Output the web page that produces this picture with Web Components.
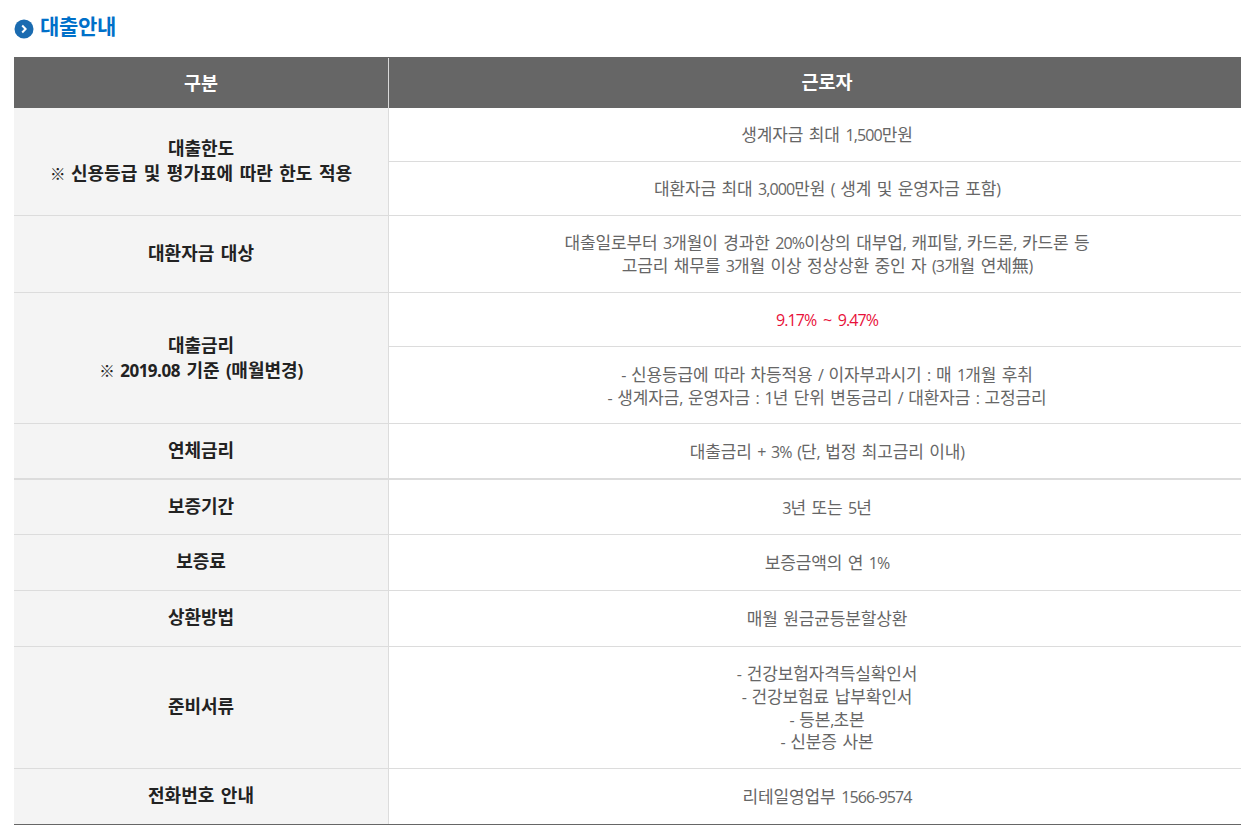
<!DOCTYPE html>
<html lang="ko">
<head>
<meta charset="utf-8">
<title>대출안내</title>
<style>
  html, body { overflow: hidden; }
  body { margin: 0; background: #fff; font-family: "Noto Sans CJK KR", "Noto Sans", sans-serif; }
  /* digits and latin marks run narrower than the hangul in this design */
  .lat {
      font-family: "Open Sans", "Noto Sans", sans-serif;
      font-size: var(--lat-size);
      font-weight: var(--lat-weight);
      letter-spacing: var(--lat-spacing);
      line-height: 0;
  }
  .mark { font-size: 15.5px; margin-right: -1px; }
</style>
</head>
<body>
<loan-guide>
  <section-title>대출안내</section-title>
  <loan-head first="구분" second="근로자"></loan-head>
  <loan-row two-line>
    <span slot="label">대출한도<br><span class="mark">※</span> 신용등급 및 평가표에 따란 한도 적용</span>
    <loan-value h="53">생계자금 최대 1,500만원</loan-value>
    <loan-value h="53">대환자금 최대 3,000만원 ( 생계 및 운영자금 포함)</loan-value>
  </loan-row>
  <loan-row>
    <span slot="label">대환자금 대상</span>
    <loan-value h="76">대출일로부터 3개월이 경과한 20%이상의 대부업, 캐피탈, 카드론, 카드론 등<br>고금리 채무를 3개월 이상 정상상환 중인 자 (3개월 연체無)</loan-value>
  </loan-row>
  <loan-row two-line>
    <span slot="label">대출금리<br><span class="mark">※</span> 2019.08 기준 (매월변경)</span>
    <loan-value h="53" tone="red">9.17% ~ 9.47%</loan-value>
    <loan-value h="74" low>- 신용등급에 따라 차등적용 / 이자부과시기 : 매 1개월 후취<br>- 생계자금, 운영자금 : 1년 단위 변동금리 / 대환자금 : 고정금리</loan-value>
  </loan-row>
  <loan-row thick>
    <span slot="label">연체금리</span>
    <loan-value h="54">대출금리 + 3% (단, 법정 최고금리 이내)</loan-value>
  </loan-row>
  <loan-row>
    <span slot="label">보증기간</span>
    <loan-value h="54">3년 또는 5년</loan-value>
  </loan-row>
  <loan-row>
    <span slot="label">보증료</span>
    <loan-value h="55">보증금액의 연 1%</loan-value>
  </loan-row>
  <loan-row>
    <span slot="label">상환방법</span>
    <loan-value h="55">매월 원금균등분할상환</loan-value>
  </loan-row>
  <loan-row>
    <span slot="label">준비서류</span>
    <loan-value h="121">- 건강보험자격득실확인서<br>- 건강보험료 납부확인서<br>- 등본,초본<br>- 신분증 사본</loan-value>
  </loan-row>
  <loan-row dark>
    <span slot="label">전화번호 안내</span>
    <loan-value h="55">리테일영업부 1566-9574</loan-value>
  </loan-row>
</loan-guide>

<script>
// wrap runs of digits and punctuation so they can take the latin font
function wrapLatin(root) {
    [...root.childNodes].forEach(node => {
        if (node.nodeType !== Node.TEXT_NODE) return;
        const parts = node.textContent.split(/([0-9A-Za-z%,.~+:()\/-]+)/);
        const frag = document.createDocumentFragment();
        parts.forEach((part, i) => {
            if (i % 2) {
                const span = document.createElement('span');
                span.className = 'lat';
                span.textContent = part;
                frag.appendChild(span);
            } else if (part) {
                frag.appendChild(document.createTextNode(part));
            }
        });
        node.replaceWith(frag);
    });
}

class LoanGuide extends HTMLElement {
    constructor() {
        super();
        this.attachShadow({ mode: 'open' });
        this.shadowRoot.innerHTML = `
        <style>
            /* the table runs past the right edge of the window */
            :host { display: block; width: 1251px; padding-left: 14px; }
        </style>
        <slot></slot>`;
    }
}

class SectionTitle extends HTMLElement {
    constructor() {
        super();
        this.attachShadow({ mode: 'open' });
        this.shadowRoot.innerHTML = `
        <style>
            :host {
                display: flex;
                align-items: center;
                gap: 6px;
                height: 57px;
                box-sizing: border-box;
                padding-bottom: 8px;
                color: #0070c9;
                font-size: 21px;
                font-weight: 700;
                letter-spacing: -0.3px;
            }
            svg { flex: none; margin-top: 9px; }
        </style>
        <svg width="20" height="20" viewBox="0 0 20 20">
            <circle cx="10" cy="10" r="9.5" fill="#1a6bb0"/>
            <path d="M8.2 6.5 L11.6 10 L8.2 13.5" fill="none" stroke="#fff" stroke-width="2"/>
        </svg>
        <slot></slot>`;
    }
}

class LoanHead extends HTMLElement {
    constructor() {
        super();
        this.attachShadow({ mode: 'open' });
        this.shadowRoot.innerHTML = `
        <style>
            :host {
                display: grid;
                grid-template-columns: 375px 1fr;
                height: 51px;
                background: #666;
                color: #fff;
                font-size: 18.5px;
                font-weight: 700;
            }
            div { display: flex; align-items: center; justify-content: center; padding-bottom: 3px; }
            .first { border-right: 1px solid #d9d9d9; margin-top: 1px; }
        </style>
        <div class="first"></div>
        <div class="second"></div>`;
    }

    connectedCallback() {
        this.shadowRoot.querySelector('.first').textContent = this.getAttribute('first');
        this.shadowRoot.querySelector('.second').textContent = this.getAttribute('second');
    }
}

class LoanRow extends HTMLElement {
    constructor() {
        super();
        this.attachShadow({ mode: 'open' });
        this.shadowRoot.innerHTML = `
        <style>
            :host {
                display: grid;
                grid-template-columns: 375px 1fr;
                border-bottom: 1px solid #dcdcdc;
            }
            :host([thick]) { border-bottom-width: 2px; }
            :host([dark]) { border-bottom-color: #666; }
            .label {
                display: flex;
                align-items: center;
                justify-content: center;
                text-align: center;
                background: #f4f4f4;
                border-right: 1px solid #dcdcdc;
                color: #222;
                font-size: 18px;
                font-weight: 700;
                line-height: 25px;
                word-spacing: 1.5px;
                --lat-size: 17px;
                --lat-weight: 700;
                --lat-spacing: -0.5px;
            }
            .label > div { padding-bottom: 4px; }
            :host([two-line]) .label > div { padding-bottom: 2px; }
            .values { display: flex; flex-direction: column; }
            ::slotted(loan-value:not(:last-child)) { border-bottom: 1px solid #dcdcdc; }
        </style>
        <div class="label"><div><slot name="label"></slot></div></div>
        <div class="values"><slot></slot></div>`;
    }

    connectedCallback() {
        const label = this.querySelector('[slot=label]');
        if (label) wrapLatin(label);
    }
}

class LoanValue extends HTMLElement {
    constructor() {
        super();
        this.attachShadow({ mode: 'open' });
        this.shadowRoot.innerHTML = `
        <style>
            :host {
                display: flex;
                align-items: center;
                justify-content: center;
                text-align: center;
                color: #666;
                font-size: 17px;
                letter-spacing: -0.14px;
                word-spacing: 0.9px;
                line-height: 22.7px;
                --lat-size: 16px;
                --lat-weight: 400;
                --lat-spacing: -0.9px;
            }
            :host([low]) { padding-top: 2px; }
            :host([tone="red"]) { color: #e8113a; word-spacing: 1.9px; }
        </style>
        <div><slot></slot></div>`;
    }

    connectedCallback() {
        this.style.height = this.getAttribute('h') + 'px';
        wrapLatin(this);
    }
}

customElements.define('loan-guide', LoanGuide);
customElements.define('section-title', SectionTitle);
customElements.define('loan-head', LoanHead);
customElements.define('loan-row', LoanRow);
customElements.define('loan-value', LoanValue);
</script>
</body>
</html>
